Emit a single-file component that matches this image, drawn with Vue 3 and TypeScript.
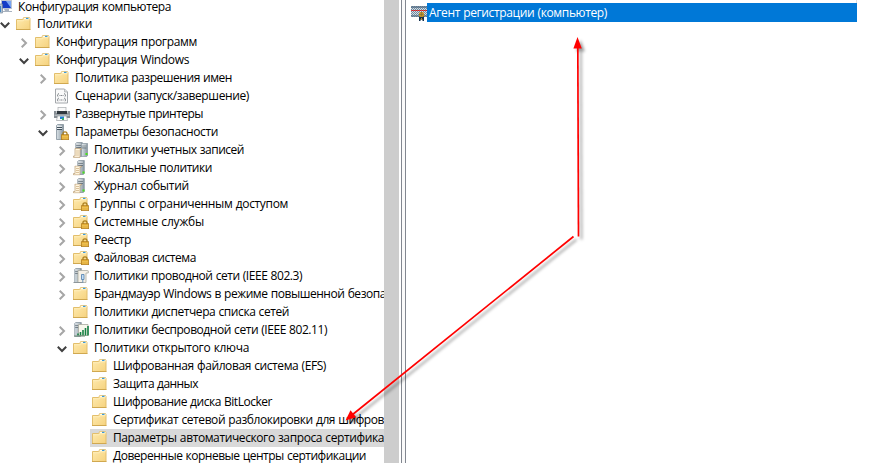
<script setup lang="ts">
type Icon = 'computer' | 'folder' | 'script' | 'printer' | 'security' | 'accounts' | 'server' | 'locked' | 'wired' | 'wireless'
interface Row {
  level: number
  icon: Icon
  text: string
  end: number
  state?: 'open' | 'closed'
  selected?: boolean
}

const rows: Row[] = [
  { level: 0, icon: 'computer', text: 'Конфигурация компьютера', end: 171 },
  { level: 1, icon: 'folder', text: 'Политики', end: 92, state: 'open' },
  { level: 2, icon: 'folder', text: 'Конфигурация программ', end: 197, state: 'closed' },
  { level: 2, icon: 'folder', text: 'Конфигурация Windows', end: 189, state: 'open' },
  { level: 3, icon: 'folder', text: 'Политика разрешения имен', end: 232, state: 'closed' },
  { level: 3, icon: 'script', text: 'Сценарии (запуск/завершение)', end: 249 },
  { level: 3, icon: 'printer', text: 'Развернутые принтеры', end: 203, state: 'closed' },
  { level: 3, icon: 'security', text: 'Параметры безопасности', end: 218, state: 'open' },
  { level: 4, icon: 'accounts', text: 'Политики учетных записей', end: 244, state: 'closed' },
  { level: 4, icon: 'server', text: 'Локальные политики', end: 212, state: 'closed' },
  { level: 4, icon: 'server', text: 'Журнал событий', end: 189, state: 'closed' },
  { level: 4, icon: 'locked', text: 'Группы с ограниченным доступом', end: 288, state: 'closed' },
  { level: 4, icon: 'locked', text: 'Системные службы', end: 204, state: 'closed' },
  { level: 4, icon: 'locked', text: 'Реестр', end: 131, state: 'closed' },
  { level: 4, icon: 'locked', text: 'Файловая система', end: 196, state: 'closed' },
  { level: 4, icon: 'wired', text: 'Политики проводной сети (IEEE 802.3)', end: 302, state: 'closed' },
  { level: 4, icon: 'folder', text: 'Брандмауэр Windows в режиме повышенной безопа', end: 386, state: 'closed' },
  { level: 4, icon: 'folder', text: 'Политики диспетчера списка сетей', end: 289 },
  { level: 4, icon: 'wireless', text: 'Политики беспроводной сети (IEEE 802.11)', end: 327, state: 'closed' },
  { level: 4, icon: 'folder', text: 'Политики открытого ключа', end: 249, state: 'open' },
  { level: 5, icon: 'folder', text: 'Шифрованная файловая система (EFS)', end: 326 },
  { level: 5, icon: 'folder', text: 'Защита данных', end: 198 },
  { level: 5, icon: 'folder', text: 'Шифрование диска BitLocker', end: 272 },
  { level: 5, icon: 'folder', text: 'Сертификат сетевой разблокировки для шифров', end: 384 },
  { level: 5, icon: 'folder', text: 'Параметры автоматического запроса сертифика', end: 384, selected: true },
  { level: 5, icon: 'folder', text: 'Доверенные корневые центры сертификации', end: 366 },
]

const ctx = document.createElement('canvas').getContext('2d')!
ctx.font = '12px "Open Sans"'

// Spreads the label over its column; each word gap is already widened by half a pixel.
function spacing(text: string, width: number): string {
  const gaps = (text.split(' ').length - 1) * 0.5
  return `${((width - gaps - ctx.measureText(text).width) / text.length).toFixed(3)}px`
}
</script>

<template>
  <div class="window">
    <svg class="defs" aria-hidden="true">
      <defs>
        <linearGradient id="paper" x1="0" y1="0" x2="1" y2="1">
          <stop offset="0" stop-color="#ffebb0" />
          <stop offset="1" stop-color="#f5d27e" />
        </linearGradient>
        <linearGradient id="steel" x1="0" y1="0" x2="1" y2="0">
          <stop offset="0" stop-color="#dbe3e8" />
          <stop offset="1" stop-color="#87959f" />
        </linearGradient>
        <pattern id="dither" width="2" height="2" patternUnits="userSpaceOnUse">
          <rect width="1" height="1" fill="#2f6ea6" />
          <rect x="1" y="1" width="1" height="1" fill="#2f6ea6" />
        </pattern>
        <symbol id="lock" viewBox="0 0 8 9">
          <path d="M2 4V2.3Q2 .8 4 .8T6 2.3V4" fill="none" stroke="#a87d1c" stroke-width="1.3" />
          <rect x=".3" y="3.7" width="7.4" height="5" fill="#dfa62b" stroke="#a9761b" stroke-width=".6" />
          <path d="M1 5.3h6M1 7h6" stroke="#f7d475" stroke-width=".7" />
        </symbol>
        <symbol id="folder" viewBox="0 0 16 16">
          <path d="M.5 13.5V3.5h6.2l1-2h5.8l.5 1v11z" fill="url(#paper)" stroke="#e3bf6c" />
          <path d="M7.8 2.5h5.7" stroke="#fffbe9" stroke-width="1.4" />
          <path d="M10 2.4h2.5" stroke="#3c9bdc" stroke-width="1.2" />
          <path d="M1 4.8h6.3l1-1H13.5" fill="none" stroke="#fff0c0" stroke-width=".8" />
          <path d="M0 13.5h14.5" stroke="#d0a850" />
        </symbol>
        <symbol id="locked" viewBox="0 0 16 16">
          <use href="#folder" width="16" height="16" />
          <use href="#lock" x="8" y="6" width="8" height="9" />
        </symbol>
        <symbol id="tower" viewBox="0 0 8 16">
          <path d="M.5 1.5l1-1h6v14l-1 1h-6z" fill="url(#steel)" stroke="#84929c" stroke-width=".8" />
          <path d="M1 3.5h5M1 5.5h5" stroke="#33434e" stroke-width=".9" />
          <path d="M1 2.3h5M1 4.5h5" stroke="#fff" stroke-width=".7" />
        </symbol>
        <symbol id="scroll" viewBox="0 0 9 10">
          <path d="M2 .5h6.5v1H7v7.9H.5V8H2z" fill="#fff5df" stroke="#b79b72" stroke-width=".7" />
          <path d="M3 3h3M3 5h3M3 7h3" stroke="#caac80" stroke-width=".7" />
        </symbol>
        <symbol id="security" viewBox="0 0 16 16">
          <use href="#tower" x="2" width="8" height="16" />
          <use href="#lock" x="7" y="7" width="8" height="9" />
        </symbol>
        <symbol id="accounts" viewBox="0 0 16 16">
          <use href="#tower" x="2" width="8" height="15" />
          <use href="#tower" x="8" y="1" width="7" height="14" />
          <rect x="12.5" y="11" width="2" height="2" fill="#47e619" />
          <use href="#scroll" y="6" width="9" height="10" />
        </symbol>
        <symbol id="server" viewBox="0 0 16 16">
          <use href="#tower" x="4" width="8" height="15" />
          <rect x="9.5" y="11.5" width="2" height="2" fill="#47e619" />
          <use href="#scroll" y="5.5" width="9" height="10" />
        </symbol>
        <symbol id="computer" viewBox="0 0 16 16">
          <rect x="4.5" y="2.5" width="10" height="8" fill="#143dc7" stroke="#bcc5d2" />
          <path d="M9 3h5v7z" fill="#79a6f3" />
          <path d="M7 11h5v2h3v1H6v-1h2z" fill="#a9b3c0" />
          <rect x="2" y="6" width="3.5" height="9" fill="#bbc8d6" stroke="#67798d" stroke-width=".6" />
          <path d="M3.6 8v6" stroke="#377fc1" />
        </symbol>
        <symbol id="script" viewBox="0 0 16 16">
          <path d="M1.5 1h9l3 3v11h-12z" fill="#fafafa" stroke="#a4a8ac" />
          <path d="M10.5 1v3h3" fill="#ddd" stroke="#a8acaf" stroke-width=".7" />
          <path d="M5 5.5q-1 0-1 1t-1 1q1 .2 1 1M10 5.5q1 0 1 1t1 1q-1 .2-1 1M5 10q-1 0-1 1t-1 1q1 .2 1 1.3M10 10q1 0 1 1t1 1q-1 .2-1 1.3" fill="none" stroke="#7b8085" stroke-width=".9" />
          <path d="M5.5 7.5h4M5.5 12h4" stroke="#777c82" stroke-dasharray="1 .6" />
        </symbol>
        <symbol id="printer" viewBox="0 0 16 16">
          <rect x="4" y="1.5" width="8" height="6" fill="#f9f9f9" stroke="#a9adb0" stroke-width=".7" />
          <path d="M0 5h2.5v2h11V5H16v7H0z" fill="#868d93" />
          <path d="M3 5h10v3H3z" fill="#30383f" />
          <path d="M.5 9.2h15" stroke="#c5cbd0" />
          <path d="M3.5 10h9l1 4.5h-11z" fill="#fbfbfb" stroke="#9ca1a5" stroke-width=".7" />
          <path d="M6 10.5h4v2.5H6z" fill="#237ed5" />
          <path d="M8 12h2v2H8z" fill="#35af64" />
        </symbol>
        <symbol id="wired" viewBox="0 0 16 16">
          <use href="#tower" x="1" width="8" height="15" />
          <path d="M5 2.5h9q2-.5 1.3 2.5H13v9.5H5z" fill="#f4f0e6" stroke="#aaa99f" stroke-width=".8" />
          <path d="M8.5 6.5h2.5v5H8.5zM9.8 11.5V15" fill="#c5def5" stroke="#5a88b3" stroke-width=".9" />
          <path d="M.5 14.5h9" stroke="#8d9599" />
        </symbol>
        <symbol id="wireless" viewBox="0 0 16 16">
          <use href="#tower" x="1" width="8" height="15" />
          <path d="M5.5 2.5h9.5v11H5.5z" fill="#f7f7ec" stroke="#aaa99f" stroke-width=".8" />
          <path d="M5 13.5v-2M7.5 13.5v-3.5M10 13.5V8M12.5 13.5V6M15 13.5V4" stroke="#168145" stroke-width="1.6" />
          <path d="M1 14h11" stroke="#6f8a76" />
        </symbol>
      </defs>
    </svg>

    <nav class="tree">
      <div v-for="row in rows" :key="row.text" class="row" :class="`level-${row.level}`">
        <span class="toggle">
          <svg v-if="row.state" class="chevron" :class="row.state" viewBox="0 0 10 10">
            <path v-if="row.state === 'open'" d="M.8 2.8L5 7l4.2-4.2" />
            <path v-else d="M2.7.8L7 5 2.7 9.2" />
          </svg>
        </span>
        <span class="item" :class="{ selected: row.selected }">
          <svg class="icon" viewBox="0 0 16 16"><use :href="`#${row.icon}`" /></svg>
          <span class="label" :style="{ letterSpacing: spacing(row.text, row.end - 18 - row.level * 19) }">{{ row.text }}</span>
        </span>
      </div>
    </nav>
    <div class="scrollbar"></div>
    <div class="splitter"></div>
    <main class="details">
      <div class="column-edge"></div>
      <div class="entry">
        <svg class="certificate" viewBox="0 0 16 16">
          <rect y="1" width="16" height="14" fill="none" />
          <rect y="1" width="16" height="11" fill="#e6ddd2" />
          <rect y="1" width="16" height="2" fill="#8e8c8c" />
          <rect y="10" width="16" height="2" fill="#9a9794" />
          <rect y="1" width="16" height="11" fill="url(#dither)" opacity=".75" />
          <path d="M0 5.5h16" stroke="#b3203a" />
          <path d="M0 5.5h16" stroke="#ee4a3c" stroke-dasharray="1 1" />
          <path d="M8 11v5h1.5v-1.5h2V16H13v-5z" fill="#12304f" />
          <rect x="8" y="7" width="5" height="5" rx="1.5" fill="#c0912a" />
          <path d="M8.5 9.5h4M10.5 7.5v4" stroke="#6d6a3c" stroke-dasharray="1 1" />
          <rect x="10" y="13" width="1" height="2" fill="#c0912a" />
        </svg>
        <div class="entry-name">
          <span :style="{ letterSpacing: spacing('Агент регистрации (компьютер)', 178) }">Агент регистрации (компьютер)</span>
        </div>
      </div>
    </main>

    <svg class="arrows" viewBox="0 0 888 463">
      <g class="arrow">
        <path class="shaft" d="M578.5 236.5L577.8 46" />
        <path class="head" d="M577.5 37l4.3 11.5h-8.4z" />
      </g>
      <g class="arrow">
        <path class="shaft" d="M573.5 236.5L352 415" />
        <path class="head" d="M345.5 420.5l5-10.2 5.8 7z" />
      </g>
    </svg>
  </div>
</template>

<style>
body { margin: 0; overflow: hidden; background: #fff; }
</style>

<style scoped>
.window {
  position: relative;
  display: flex;
  width: 888px;
  height: 463px;
  overflow: hidden;
  font: 12px/18px "Open Sans", "Noto Sans", sans-serif;
  word-spacing: .5px;
  color: #000;
}
.defs { position: absolute; width: 0; height: 0; }
.tree { flex: none; width: 384px; height: 466px; margin-top: -3px; overflow: hidden; }
.row { display: flex; height: 18px; white-space: nowrap; }
.level-0 { margin-left: -23px; }
.level-1 { margin-left: -4px; }
.level-2 { padding-left: 15px; }
.level-3 { padding-left: 34px; }
.level-4 { padding-left: 53px; }
.level-5 { padding-left: 72px; }
.toggle { display: flex; flex: none; align-items: center; justify-content: center; width: 18px; padding: 2px 1px 0 0; box-sizing: border-box; }
.chevron { width: 10px; height: 10px; fill: none; stroke: #a6a6a6; stroke-width: 2; }
.chevron.open { stroke: #404040; }
.item { display: flex; flex: 1 0 auto; align-items: center; padding-left: 2px; }
.selected { background: #d9d9d9; }
.icon { flex: none; width: 16px; height: 16px; margin-right: 5px; }
.label { display: block; height: 18px; }
.level-0 .label { line-height: 19px; }
.scrollbar { flex: none; width: 15px; background: #cdcdcd; }
.splitter { flex: none; width: 3px; margin: 0 0 0 2px; background: #fafafa; border-left: 1px solid #828790; border-right: 1px solid #828790; }
.details { flex: 1; }
.column-edge { width: 450px; height: 3px; border-right: 1px solid #dedede; }
.entry { display: flex; align-items: center; height: 19px; padding-left: 5px; }
.certificate { width: 16px; height: 16px; flex: none; }
.entry-name { width: 428px; height: 19px; padding-left: 2px; line-height: 19px; color: #fff; background: #0078d7; white-space: nowrap; }
.arrows { position: absolute; inset: 0; width: 888px; height: 463px; pointer-events: none; }
.arrow { filter: drop-shadow(3px 3px 1.5px rgba(0, 0, 0, .4)); }
.shaft { stroke: #f00; stroke-width: 1.7; }
.head { fill: #f00; }
</style>
